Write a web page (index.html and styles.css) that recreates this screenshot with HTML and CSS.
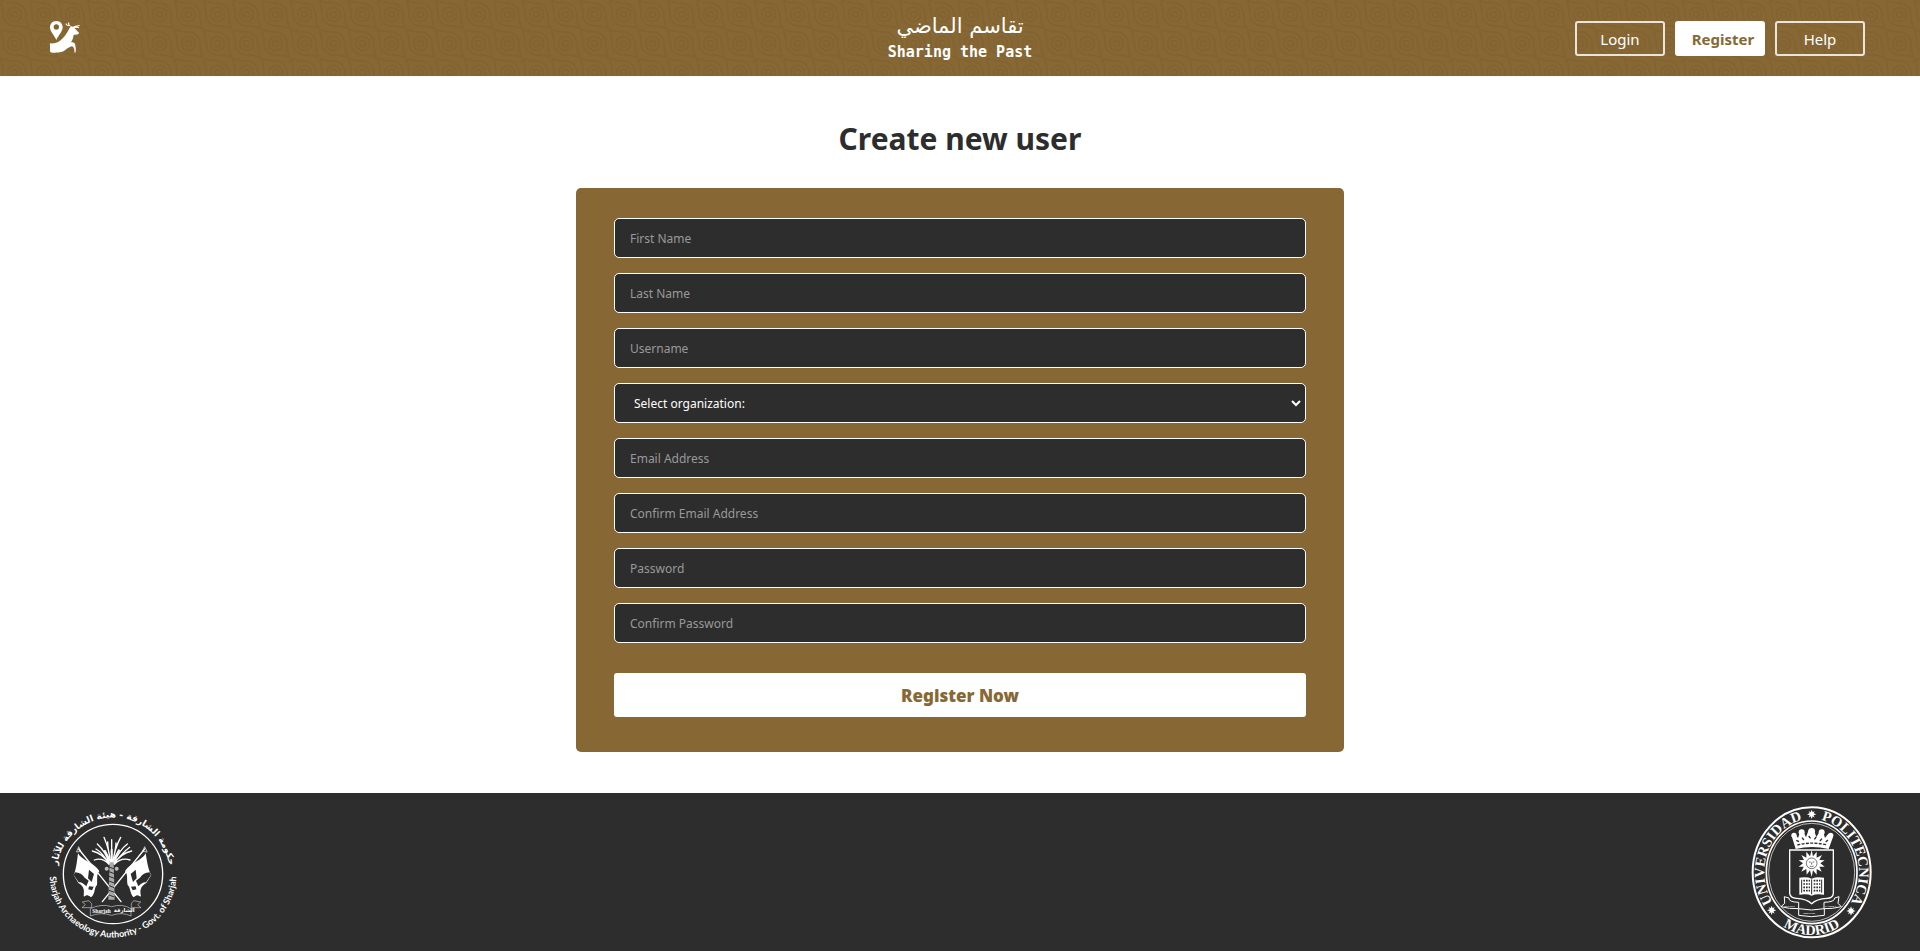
FILE: index.html
```html
<!DOCTYPE html>
<html lang="en">
<head>
<meta charset="utf-8">
<title>Sharing the Past</title>
<link rel="stylesheet" href="styles.css">
</head>
<body>
<header class="header">
  <svg class="header-pattern" aria-hidden="true">
    <defs>
      <pattern id="waves" width="29" height="29" patternUnits="userSpaceOnUse">
        <g fill="none" stroke="#826331" stroke-width="2">
          <circle cx="14.5" cy="14.5" r="3"/>
          <circle cx="14.5" cy="14.5" r="7"/>
          <path d="M0 0C6 3 9 3 14.5 3A11.5 11.5 0 0 1 26 14.5C26 20 26 24 29 29M0 0C3 6 3 9 3 14.5A11.5 11.5 0 0 0 14.5 26C20 26 24 26 29 29"/>
        </g>
      </pattern>
    </defs>
    <rect width="100%" height="100%" fill="url(#waves)"/>
  </svg>
  <a class="home" href="#" aria-label="Home">
    <svg class="home-icon" viewBox="45 51 120 120" fill="#fff">
      <path fill-rule="evenodd" d="M79 60C67 60 60 69 60 79C60 92 72 102 79 117C86 102 98 92 98 79C98 69 91 60 79 60ZM79 70A8 8 0 1 1 79 86A8 8 0 1 1 79 70Z"/>
      <path d="M60 127C72 128 80 126 88 121C101 112 109 100 117 85C118 81 120 78 123 77L120 75C113 76 108 73 106 68L109 67C110 71 113 73 116 73C113 70 113 67 115 64L118 66C116 70 119 73 124 76L129 77C134 76 136 73 137 74L149 72L149 75L141 77L148 79L146 82L138 80L133 82C138 84 138 88 147 95L146 99C140 102 135 101 131 101C130 110 127 118 123 124C133 123 136 127 136 134C138 142 138 149 136 155L133 154C134 145 132 138 126 136C119 136 112 143 103 149C91 156 76 154 69 155C64 156 59 153 60 147C61 140 59 132 60 127Z"/>
    </svg>
  </a>
  <div class="brand">
    <span class="brand-ar" lang="ar" dir="rtl">تقاسم الماضي</span>
    <span class="brand-en">Sharing the Past</span>
  </div>
  <nav class="nav">
    <a class="nav-link" href="#">Login</a>
    <a class="nav-link nav-link-active" href="#">Register</a>
    <a class="nav-link" href="#">Help</a>
  </nav>
</header>

<main class="main">
  <h1 class="title">Create new user</h1>
  <form class="card">
    <input class="field" type="text" placeholder="First Name" aria-label="First Name">
    <input class="field" type="text" placeholder="Last Name" aria-label="Last Name">
    <input class="field" type="text" placeholder="Username" aria-label="Username">
    <div class="select-wrap">
      <select class="field field-select" aria-label="Organization"><option>Select organization:</option></select>
      <svg class="chevron" viewBox="0 0 10 10" fill="none" stroke="#fff" stroke-width="2" aria-hidden="true"><path d="M1 3L5 7L9 3"/></svg>
    </div>
    <input class="field" type="email" placeholder="Email Address" aria-label="Email Address">
    <input class="field" type="email" placeholder="Confirm Email Address" aria-label="Confirm Email Address">
    <input class="field" type="password" placeholder="Password" aria-label="Password">
    <input class="field" type="password" placeholder="Confirm Password" aria-label="Confirm Password">
    <button class="submit" type="submit">Register Now</button>
  </form>
</main>

<footer class="footer">
  <svg class="seal seal-saa" viewBox="50 46 402 408" role="img" aria-label="Sharjah Archaeology Authority">
    <defs>
      <path id="saa-top" d="M82 290A170 170 0 1 1 414 290"/>
      <path id="saa-bottom" d="M61 220A190 190 0 1 0 435 220"/>
    </defs>
    <circle cx="248" cy="253" r="149" fill="none" stroke="#fff" stroke-width="4"/>
    <text class="saa-ar" text-anchor="middle"><textPath href="#saa-top" startOffset="50%">حكومة الشارقة - هيئة الشارقة للآثار</textPath></text>
    <text class="saa-en" text-anchor="middle"><textPath href="#saa-bottom" startOffset="50%">Sharjah Archaeology Authority - Govt. of Sharjah</textPath></text>
    <g stroke="#fff" fill="none" stroke-linecap="round">
      <path stroke-width="4" d="M145 178L272 336M343 178L216 336"/>
      <path stroke-width="2" d="M139 186L145 171L151 184ZM337 184L343 171L350 186Z"/>
    </g>
    <g fill="#fff">
      <path d="M143 191C154 212 190 218 207 244C197 256 202 270 200 286C190 296 196 312 182 323C166 310 166 322 160 320C162 302 162 290 144 280L130 256C136 246 140 216 143 191Z"/>
      <path d="M346 191C336 212 302 218 284 244C294 256 288 270 292 286C302 296 298 312 310 323C326 310 324 322 332 320C328 302 330 290 348 280L363 256C355 246 350 216 346 191Z"/>
    </g>
    <g fill="#2d2d2d">
      <path d="M134 248C147 249 157 254 163 264L175 273L168 290C161 283 154 277 145 278L130 256Z"/>
      <path d="M176 240L191 253L184 277L173 266ZM176 290L190 291L185 302L174 299Z"/>
      <path d="M358 248C345 249 335 254 329 264L317 273L324 290C331 283 338 277 347 278L362 256Z"/>
      <path d="M316 240L301 253L308 277L319 266ZM316 290L302 291L307 302L318 299Z"/>
    </g>
    <g fill="none" stroke="#fff" stroke-width="4" stroke-linecap="round">
      <path d="M244 222L244 150M241 222Q237 180 221 143M247 222Q253 175 271 143M238 222Q225 185 201 163M250 222Q266 182 291 163M236 222Q218 192 186 184M252 222Q270 192 304 184M236 224Q216 202 192 211M252 224Q274 202 299 211M242 222Q232 175 232 157M246 222Q257 175 257 160M237 222Q215 188 197 178M251 222Q278 188 298 173"/>
      <path stroke-width="6" d="M238 212L224 184M250 212L266 182M244 216V180"/>
    </g>
    <circle cx="229" cy="237" r="6" fill="#bbb"/><circle cx="259" cy="237" r="6" fill="#bbb"/>
    <path d="M238 218H250L253 330H234Z" fill="#aaa"/>
    <path d="M236 232L252 238M236 246L252 252M236 260L252 266M236 274L252 280M236 288L252 294M236 302L252 308M236 316L252 322" stroke="#2d2d2d" stroke-width="3"/>
    <path d="M156 337L176 333L184 342V354H155L165 345ZM331 337L310 333L303 342V354H332L322 345ZM180 357Q212 341 244 351Q276 341 302 357V379Q276 366 244 377Q212 366 180 379Z" fill="#2d2d2d" stroke="#ccc" stroke-width="2"/>
    <text class="saa-label" x="186" y="369">Sharjah</text>
    <text class="saa-label" x="250" y="368">الشارقة</text>
  </svg>

  <svg class="seal seal-upm" viewBox="46 46 384 408" role="img" aria-label="Universidad Politécnica Madrid">
    <defs>
      <path id="upm-top" d="M246 408A142 160 0 0 1 246 88A142 160 0 0 1 246 408"/>
      <path id="upm-bottom" d="M76 248A170 188 0 0 0 416 248"/>
      <path id="star" d="M0-14L3-6L9-10L6-3L14 0L6 3L9 10L3 6L0 14L-3 6L-9 10L-6 3L-14 0L-6-3L-9-10L-3-6Z"/>
    </defs>
    <g fill="none" stroke="#fff">
      <ellipse cx="246" cy="248" rx="177" ry="195" stroke-width="6"/>
      <ellipse cx="246" cy="248" rx="136" ry="154" stroke-width="5"/>
      <ellipse cx="246" cy="248" rx="129" ry="147" stroke-width="2"/>
    </g>
    <text class="upm-text" text-anchor="middle"><textPath href="#upm-top" startOffset="31%">UNIVERSIDAD</textPath></text>
    <text class="upm-text" text-anchor="middle"><textPath href="#upm-top" startOffset="69%">POLITECNICA</textPath></text>
    <text class="upm-text" text-anchor="middle"><textPath href="#upm-bottom" startOffset="50%">MADRID</textPath></text>
    <g fill="#fff">
      <use href="#star" x="246" y="74"/>
      <use href="#star" x="126" y="362"/>
      <use href="#star" x="364" y="364"/>
      <path d="M198 178L186 139L196 132L205 145L211 128L222 128L229 143L237 121L252 119L260 142L269 128L281 128L286 145L296 132L310 142L297 178Q247 166 198 178Z"/>
      <circle cx="193" cy="137" r="8"/><circle cx="216" cy="128" r="9"/><circle cx="246" cy="125" r="10"/><circle cx="276" cy="128" r="9"/><circle cx="303" cy="137" r="8"/>
    </g>
    <path d="M200 152L208 156M217 144L225 154M237 139L245 149M254 149L262 139M271 154L279 144M288 157L296 150M203 166Q246 155 293 166" stroke="#2d2d2d" stroke-width="4" stroke-dasharray="9 4" fill="none"/>
    <path d="M180 181H311V311Q310 325 292 326Q260 328 246 342Q232 328 200 326Q182 325 180 311Z" fill="#2d2d2d" stroke="#fff" stroke-width="4"/>
    <path fill="#fff" d="M246 181L250 200L261 186L261 204L277 196L269 211L285 212L272 221L285 231L269 231L276 246L261 238L261 255L250 242L246 262L241 242L231 255L230 238L215 246L222 231L207 231L220 221L207 212L223 211L215 196L230 204L230 186L241 200Z"/>
    <circle cx="246" cy="221" r="16" fill="#fff" stroke="#2d2d2d" stroke-width="2"/>
    <path d="M238 217H243M249 217H254M246 218V225M240 229Q246 233 252 229" fill="none" stroke="#2d2d2d" stroke-width="2"/>
    <path d="M209 264Q232 260 246 267Q260 260 283 264V315Q260 311 246 318Q232 311 209 315Z" fill="#fff"/>
    <g fill="none" stroke="#2d2d2d" stroke-width="3">
      <path d="M246 269V314M216 270V309M276 270V309"/>
      <path stroke-width="5" stroke-dasharray="5 3" d="M221 273H241M221 283H241M221 293H241M221 303H241M252 273H272M252 283H272M252 293H272M252 303H272"/>
    </g>
    <g fill="#2d2d2d" stroke="#fff" stroke-width="3">
      <path d="M164 321L178 325Q176 337 207 338V357Q178 358 154 351L165 341ZM328 321L315 325Q316 337 283 338V357Q308 358 335 351L325 341Z"/>
      <path d="M207 357Q246 365 284 357V377Q246 385 207 377Z"/>
    </g>
    <text class="upm-label" x="164" y="352">TECHNI</text>
    <text class="upm-label" x="286" y="352">NATURA</text>
    <text class="upm-label" x="221" y="374">IMPENDI</text>
  </svg>
</footer>
</body>
</html>
```
FILE: styles.css
```css
* {
  box-sizing: border-box;
}

body {
  margin: 0;
  min-height: 100vh;
  display: flex;
  flex-direction: column;
  background: #fff;
  color: #2d2d2d;
  font-family: "Noto Sans", sans-serif;
}

.header {
  position: relative;
  display: grid;
  grid-template-columns: 1fr auto 1fr;
  align-items: center;
  height: 76px;
  background: #876835;
}

.header-pattern {
  position: absolute;
  inset: 0;
  width: 100%;
  height: 100%;
}

.home,
.brand,
.nav {
  position: relative;
}

.home {
  padding-left: 45px;
}

.home-icon {
  display: block;
  width: 40px;
  height: 40px;
}

.brand {
  display: flex;
  flex-direction: column;
  align-items: center;
  color: #fff;
}

.brand-ar {
  font: 21px/28px "DejaVu Sans", sans-serif;
}

.brand-en {
  font: bold 15px/24px "DejaVu Sans Mono", monospace;
}

.nav {
  display: flex;
  justify-content: flex-end;
  gap: 10px;
  padding-right: 55px;
}

.nav-link {
  width: 90px;
  height: 35px;
  border: 2px solid #ebe4da;
  border-radius: 3px;
  color: #fff;
  font-size: 15px;
  line-height: 33px;
  text-align: center;
  text-decoration: none;
}

.nav-link-active {
  padding-left: 6px;
  border-color: #fff;
  background: #fff;
  color: #876835;
  font-weight: 700;
}

.main {
  flex: 1;
  display: flex;
  flex-direction: column;
  align-items: center;
}

.title {
  margin: 41px 0 27px;
  font-size: 30px;
  line-height: 44px;
}

.card {
  width: 40%;
  display: flex;
  flex-direction: column;
  gap: 15px;
  margin-bottom: 41px;
  padding: 30px 38px 35px;
  border-radius: 5px;
  background: #876835;
}

.field {
  display: block;
  width: 100%;
  height: 40px;
  padding: 0 15px;
  border: 1px solid #fff;
  border-radius: 5px;
  background: #2d2d2d;
  color: #fff;
  font: 12px "Noto Sans", sans-serif;
}

.field::placeholder {
  color: #999;
  opacity: 1;
}

.select-wrap {
  position: relative;
}

.field-select {
  padding-left: 19px;
  appearance: none;
}

.chevron {
  position: absolute;
  top: 15px;
  right: 5px;
  width: 10px;
  height: 10px;
  pointer-events: none;
}

.submit {
  height: 44px;
  margin-top: 15px;
  border: 0;
  border-radius: 3px;
  background: #fff;
  color: #876835;
  font: 900 17px "Noto Sans", sans-serif;
}

.footer {
  display: flex;
  justify-content: space-between;
  padding: 12px 47px 10px;
  background: #2d2d2d;
}

.seal {
  height: 136px;
}

.seal-saa {
  width: 134px;
}

.seal-upm {
  width: 128px;
}

.seal text {
  fill: #fff;
}

.saa-ar {
  font: bold 27px "DejaVu Sans", sans-serif;
}

.saa-en {
  font: bold 27px Lato, sans-serif;
}

.saa-label {
  font: bold 16px "Liberation Serif", "DejaVu Sans", serif;
}

.upm-text {
  font: bold 43px "Liberation Serif", serif;
}

.seal .upm-label {
  font: bold 8px "Liberation Serif", serif;
}
```
